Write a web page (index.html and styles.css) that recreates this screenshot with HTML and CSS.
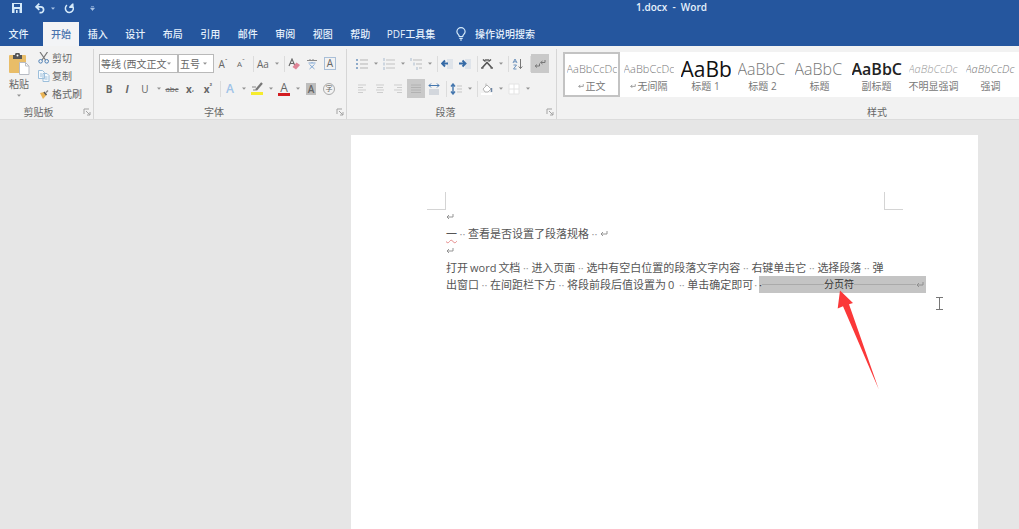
FILE: index.html
```html
<!DOCTYPE html>
<html lang="zh-CN">
<head>
<meta charset="utf-8">
<title>1.docx - Word</title>
<link rel="stylesheet" href="styles.css">
</head>
<body>
<svg class="defs" aria-hidden="true">
  <symbol id="caret" viewBox="0 0 4 3"><path d="M0 0.5h4L2 2.8z" fill="currentColor"/></symbol>
  <symbol id="launch" viewBox="0 0 8 8"><path d="M1 6V1h5M3 3l4 4M7 4v3H4" fill="none" stroke="#a3a3a3"/></symbol>
  <symbol id="ret" viewBox="0 0 8 7"><path d="M7 1v3H1M3 2L1 4l2 2" fill="none" stroke="currentColor" stroke-width=".9"/></symbol>
</svg>

<header class="top">
  <div class="titlebar">
    <div class="quick">
      <button class="q" aria-label="保存"><svg width="10" height="10" viewBox="0 0 10 10"><path d="M0 0h10v10H0z" fill="#d5eafa"/><path d="M2 1h6v3H2zM2.5 6h5v4h-5z" fill="#25569e"/><path d="M4 7h1.6v3H4z" fill="#d5eafa"/></svg></button>
      <button class="q" aria-label="撤消"><svg width="10" height="11" viewBox="0 0 10 11"><path d="M1.2 3.8h4.3a2.9 2.9 0 0 1 .3 5.9H4.5M4.3.6L1.1 3.8l3.2 3.1" fill="none" stroke="#d5eafa" stroke-width="1.7"/></svg></button>
      <button class="qc" aria-label="撤消选项"><svg class="caret"><use href="#caret"/></svg></button>
      <button class="q" aria-label="重做"><svg width="11" height="11" viewBox="0 0 11 11"><path d="M7.6 2.1A4 4 0 1 1 3 2.2M5.2 4.3h3.6V.4M8.8 1L6 4" fill="none" stroke="#d5eafa" stroke-width="1.5"/></svg></button>
      <button class="q customize" aria-label="自定义快速访问工具栏"><svg width="5" height="5" viewBox="0 0 5 5"><path d="M1 .5h3M.5 2h4L2.5 4.5z" fill="#a9c4e6" stroke="#a9c4e6" stroke-width=".6"/></svg></button>
    </div>
    <h1 class="title">1.docx&nbsp; -&nbsp; Word</h1>
  </div>
  <nav class="tabs">
    <button class="file">文件</button>
    <button class="active">开始</button>
    <div class="more">
      <button>插入</button><button>设计</button><button>布局</button><button>引用</button><button>邮件</button><button>审阅</button><button>视图</button><button>帮助</button>
    </div>
    <button class="pdf">PDF工具集</button>
    <button class="tell"><svg width="10" height="14" viewBox="0 0 10 14"><path d="M3.3 9.5C3.3 7.6.9 7 .9 4.7A4.1 4.1 0 0 1 9.1 4.7C9.1 7 6.7 7.6 6.7 9.5zM3.3 11.3h3.4M4 13h2" fill="none" stroke="#d5eafa" stroke-width="1.2"/></svg>操作说明搜索</button>
  </nav>
</header>

<section class="ribbon">
  <div class="group clip">
    <div class="body">
      <button class="paste"><svg width="22" height="22" viewBox="0 0 22 22"><rect x="1" y="2" width="17" height="18" rx="1" fill="#e9bd68"/><path d="M5 2h2a2.5 2.5 0 0 1 5 0h2v4H5z" fill="#555"/><circle cx="9.5" cy="2.5" r="1" fill="#fff"/><path d="M11.5 9.5h6l3.500 3.500v8.500h-9.500z" fill="#fff" stroke="#b8bcc4"/><path d="M17.5 9.5V13H21" fill="none" stroke="#b8bcc4"/></svg><span>粘贴</span><svg class="caret"><use href="#caret"/></svg></button>
      <div class="stack">
        <button><svg width="12" height="12" viewBox="0 0 12 12"><path d="M2 0l5.500 8M9.500 0L4 8" stroke="#777" stroke-width="1.200"/><circle cx="2.600" cy="9.300" r="1.800" fill="none" stroke="#4d7fb5"/><circle cx="8.700" cy="9.300" r="1.800" fill="none" stroke="#4d7fb5"/></svg>剪切</button>
        <button><svg width="12" height="12" viewBox="0 0 12 12"><path d="M.5.500h4l2 2v6h-6zM5 3.500h4l2 2v6H5z" fill="#f4f9fd" stroke="#9dbfdb"/><path d="M2 4h2M2 6h2M6.500 7h3M6.500 9h3" stroke="#9dbfdb"/></svg>复制</button>
        <button><svg width="12" height="12" viewBox="0 0 12 12"><path d="M2 5l4-1 2.500 3-3.500 4z" fill="#e9b455"/><path d="M6 4l2.500 3" stroke="#555" stroke-width="1.500"/><path d="M8 4.500l2-2" stroke="#888" stroke-width="1.500"/></svg>格式刷</button>
      </div>
    </div>
    <div class="foot"><span>剪贴板</span><button aria-label="剪贴板设置"><svg width="8" height="8"><use href="#launch"/></svg></button></div>
  </div>

  <div class="group font">
    <div class="body rows">
      <div class="row combos">
        <label class="combo name"><select aria-label="字体"><option>等线 (西文正文)</option></select><svg class="caret"><use href="#caret"/></svg></label>
        <label class="combo size"><select aria-label="字号"><option>五号</option></select><svg class="caret"><use href="#caret"/></svg></label>
        <button class="t" aria-label="增大字号">A<sup>ˆ</sup></button>
        <button class="t small" aria-label="减小字号">A<sup>ˇ</sup></button>
        <i class="sep"></i>
        <button class="t">Aa</button><button class="c" aria-label="更改大小写选项"><svg class="caret"><use href="#caret"/></svg></button>
        <i class="sep"></i>
        <button aria-label="清除格式"><svg width="12" height="12" viewBox="0 0 12 12"><path d="M1 8l3-7 3 7M2 5.500h4" fill="none" stroke="#666" stroke-width="1.100"/><path d="M8.500 4.500L12 7l-4 4.500-3.500-2.500z" fill="#df8496"/></svg></button>
        <button aria-label="拼音指南"><svg width="12" height="12" viewBox="0 0 12 12"><path d="M1 2.500h10M4 1v1M7 1v1" stroke="#888"/><path d="M2.500 5h7M6 4v1M3.500 6.500l5 4.500M8.500 6.500l-5 4.500" stroke="#82a9d5" fill="none"/></svg></button>
        <button class="t"><span class="boxed">A</span></button>
      </div>
      <div class="row">
        <button class="t b">B</button><button class="t it">I</button><button class="t">U</button><button class="c" aria-label="下划线选项"><svg class="caret"><use href="#caret"/></svg></button>
        <button class="t strike">abc</button><button class="t b">x<sub>,</sub></button><button class="t b">x<sup>²</sup></button>
        <i class="sep"></i>
        <button class="t glow">A</button><button class="c" aria-label="文本效果选项"><svg class="caret"><use href="#caret"/></svg></button>
        <button aria-label="突出显示"><svg width="14" height="13" viewBox="0 0 14 13"><path d="M1 10h12v3H1z" fill="#f6ec2d"/><path d="M2 5h4M3 8h3" stroke="#888"/><path d="M12 1L6 8" stroke="#777" stroke-width="2.200"/></svg></button><button class="c" aria-label="突出显示颜色"><svg class="caret"><use href="#caret"/></svg></button>
        <button class="t"><span class="red">A</span></button><button class="c" aria-label="字体颜色选项"><svg class="caret"><use href="#caret"/></svg></button>
        <button class="t"><span class="shade">A</span></button>
        <button class="t"><span class="circle">字</span></button>
      </div>
    </div>
    <div class="foot"><span>字体</span><button aria-label="字体设置"><svg width="8" height="8"><use href="#launch"/></svg></button></div>
  </div>

  <div class="group para">
    <div class="body rows">
      <div class="row">
        <button aria-label="项目符号"><svg width="12" height="12" viewBox="0 0 12 12"><path d="M0 2h2M0 6h2M0 10h2" stroke="#6f94bd" stroke-width="1.500"/><path d="M4 2h8M4 6h8M4 10h8" stroke="#b5b5b5"/></svg></button><button class="c" aria-label="项目符号选项"><svg class="caret"><use href="#caret"/></svg></button>
        <button aria-label="编号"><svg width="12" height="12" viewBox="0 0 12 12"><path d="M1 0v3M1 4.500v3M1 9v3" stroke="#a8bace"/><path d="M3 2h9M3 6h9M3 10h9" stroke="#c2c2c2"/></svg></button><button class="c" aria-label="编号选项"><svg class="caret"><use href="#caret"/></svg></button>
        <button aria-label="多级列表"><svg width="12" height="12" viewBox="0 0 12 12"><path d="M1 0v3M4 4.500v3M7 9v3" stroke="#a8bace"/><path d="M3 2h9M6 6h6M9 10h3" stroke="#bbb"/></svg></button><button class="c" aria-label="多级列表选项"><svg class="caret"><use href="#caret"/></svg></button>
        <i class="sep"></i>
        <button aria-label="减少缩进"><svg width="12" height="12" viewBox="0 0 12 12"><path d="M6 1h6v10H6z" fill="#dfe4ea"/><path d="M1 5.500h6M4 2.500l-3 3 3 3" fill="none" stroke="#356aa6" stroke-width="1.900"/></svg></button>
        <button aria-label="增加缩进"><svg width="12" height="12" viewBox="0 0 12 12"><path d="M6 1h6v10H6z" fill="#dfe4ea"/><path d="M0 5.500h6M3.500 2.500l3 3-3 3" fill="none" stroke="#356aa6" stroke-width="1.900"/></svg></button>
        <i class="sep"></i>
        <button aria-label="中文版式"><svg width="12" height="12" viewBox="0 0 12 12"><path d="M2 1.500l2.500 2M10 1.500l-2.500 2M1 10l5-5.500 5 5.500" fill="none" stroke="#555" stroke-width="1.600"/><path d="M4 2h4M0 10h2.500M9.500 10H12" stroke="#666" stroke-width="1.300"/></svg></button><button class="c" aria-label="中文版式选项"><svg class="caret"><use href="#caret"/></svg></button>
        <i class="sep"></i>
        <button aria-label="排序"><svg width="12" height="12" viewBox="0 0 12 12"><path d="M1 5l2-4 2 4M1.700 3.800h2.600M1.500 7h3l-3 4h3" fill="none" stroke="#6d92bd"/><path d="M8.500 1v9.500M6.700 8.500l1.800 2 1.800-2" fill="none" stroke="#777"/></svg></button>
        <i class="sep"></i>
        <button class="on" aria-label="显示编辑标记"><svg width="12" height="12" viewBox="0 0 12 12"><path d="M11 2v2.500H6.500M8.500 3L6.700 4.500 8.500 6M5.500 5.500V8H1M3 6.500L1.200 8 3 9.500" fill="none" stroke="#777"/></svg></button>
      </div>
      <div class="row">
        <button aria-label="左对齐"><svg width="10" height="10" viewBox="0 0 10 10"><path d="M1 1h8M1 3.500h5M1 6h8M1 8.500h5" stroke="#cdcdcd"/></svg></button>
        <button aria-label="居中"><svg width="10" height="10" viewBox="0 0 10 10"><path d="M1 1h8M2 3.500h6M1 6h8M2 8.500h6" stroke="#cdcdcd"/></svg></button>
        <button aria-label="右对齐"><svg width="10" height="10" viewBox="0 0 10 10"><path d="M1 1h8M4 3.500h5M1 6h8M4 8.500h5" stroke="#cdcdcd"/></svg></button>
        <button class="on" aria-label="两端对齐"><svg width="10" height="10" viewBox="0 0 10 10"><path d="M0 1h10M0 3.500h10M0 6h10M0 8.500h10" stroke="#b2b2b2"/></svg></button>
        <button aria-label="分散对齐"><svg width="12" height="12" viewBox="0 0 12 12"><path d="M1 2.500h10M3 .5l-2 2 2 2M9 .5l2 2-2 2" fill="none" stroke="#4577ae"/><path d="M1 6h10v6H1z" fill="#d3d7dd"/></svg></button>
        <i class="sep"></i>
        <button aria-label="行距"><svg width="12" height="12" viewBox="0 0 12 12"><path d="M3 1v10M1 3.500L3 1l2 2.500M1 8.500L3 11l2-2.500" fill="none" stroke="#4577ae" stroke-width="1.400"/><path d="M7 3h5M7 6h5M7 9h5" stroke="#c5c5c5"/></svg></button><button class="c" aria-label="行距选项"><svg class="caret"><use href="#caret"/></svg></button>
        <i class="sep"></i>
        <button aria-label="底纹"><svg width="12" height="12" viewBox="0 0 12 12"><path d="M2 6l4-4 4 4-3 3H4zM5 3V.5" fill="#fff" stroke="#b5b5b5"/><path d="M10.500 5v4" stroke="#6d86a5" stroke-width="1.500"/><path d="M0 11h11" stroke="#fff" stroke-width="2"/></svg></button><button class="c" aria-label="底纹选项"><svg class="caret"><use href="#caret"/></svg></button>
        <button aria-label="边框"><svg width="12" height="12" viewBox="0 0 12 12"><path d="M1 1h10v10H1zM6 1v10M1 6h10" fill="#fff" stroke="#e4e4e4"/></svg></button><button class="c" aria-label="边框选项"><svg class="caret"><use href="#caret"/></svg></button>
      </div>
    </div>
    <div class="foot"><span>段落</span><button aria-label="段落设置"><svg width="8" height="8"><use href="#launch"/></svg></button></div>
  </div>

  <div class="group styles">
    <div class="gallery">
      <button class="chosen"><span class="pv">AaBbCcDc</span><span class="nm"><svg class="mk"><use href="#ret"/></svg>正文</span></button>
      <button><span class="pv">AaBbCcDc</span><span class="nm"><svg class="mk"><use href="#ret"/></svg>无间隔</span></button>
      <button><span class="pv h1">AaBb</span><span class="nm">标题 1</span></button>
      <button><span class="pv h2">AaBbC</span><span class="nm">标题 2</span></button>
      <button><span class="pv h2">AaBbC</span><span class="nm">标题</span></button>
      <button><span class="pv h2 sub">AaBbC</span><span class="nm">副标题</span></button>
      <button><span class="pv em">AaBbCcDc</span><span class="nm">不明显强调</span></button>
      <button><span class="pv em dark">AaBbCcDc</span><span class="nm">强调</span></button>
    </div>
    <div class="foot"><span>样式</span></div>
  </div>
</section>

<main class="canvas">
  <article class="page">
    <div class="corners"><i class="left"></i><i class="right"></i></div>
    <div class="text">
      <p><svg class="mark"><use href="#ret"/></svg></p>
      <p><span class="err">一</span><span class="sp">··</span>查看是否设置了段落规格<span class="sp">··</span><svg class="mark"><use href="#ret"/></svg></p>
      <p><svg class="mark"><use href="#ret"/></svg></p>
      <p>打开<span class="latin">word</span>文档<span class="sp">··</span>进入页面<span class="sp">··</span>选中有空白位置的段落文字内容<span class="sp">··</span>右键单击它<span class="sp">··</span>选择段落<span class="sp">··</span>弹</p>
      <p>出窗口<span class="sp">··</span>在间距栏下方<span class="sp">··</span>将段前段后值设置为<span class="num">0</span><span class="sp">··</span>单击确定即可<span class="sp half">·</span><span class="break"><span>·</span><i></i><b>分页符</b><i></i><svg class="mark"><use href="#ret"/></svg></span></p>
    </div>
    <svg class="pointer" width="44" height="102" viewBox="0 0 44 102" aria-hidden="true"><path d="M4 1.500L17 14l-4 1.200L42.800 100.500 7 17.300 1.700 19.500z" fill="#fb3839"/></svg>
    <svg class="ibeam" width="7" height="13" viewBox="0 0 7 13" aria-hidden="true"><path d="M0 .5h7M3.500.5v12M0 12.500h7" stroke="#777" fill="none"/></svg>
  </article>
</main>
</body>
</html>
```
FILE: styles.css
```css
* { box-sizing: border-box; }
body {
  margin: 0;
  min-height: 100vh;
  display: flex;
  flex-direction: column;
  overflow: hidden;
  background: #e6e6e6;
  font: 10px/14px "Open Sans", "Noto Sans CJK SC", sans-serif;
  color: #666;
}
button {
  border: 0;
  padding: 0;
  margin: 0;
  background: none;
  color: inherit;
  font: inherit;
  white-space: nowrap;
  display: flex;
  align-items: center;
  justify-content: center;
}
svg { flex: none; display: block; }
.defs { position: absolute; width: 0; height: 0; }
.caret { width: 4px; height: 3px; color: #929292; }

/* title bar and tabs */
.top { background: #25569e; color: #e6f1fc; }
.titlebar { height: 22px; display: flex; align-items: flex-start; }
.quick { display: flex; align-items: center; height: 16px; padding-left: 8px; width: 636px; }
.q { width: 17px; }
.q + .q, .quick .q:nth-child(2) { margin-left: 6px; }
.qc { width: 10px; }
.qc + .q { margin-left: 3px; }
.qc .caret { color: #a9c4e6; }
.quick .customize { margin-left: 6px; }
.title { margin: 0; font-size: 10px; font-weight: 600; line-height: 14px; white-space: nowrap; }
.tabs { display: flex; height: 24px; font-weight: 500; }
.file { width: 37px; }
.active { width: 36px; margin-left: 6px; background: #f3f4f6; color: #4a73ad; }
.more { display: flex; width: 300px; }
.more button { flex: 1; }
.pdf { width: 64px; }
.tell { margin-left: 13px; gap: 9px; }

/* ribbon */
.ribbon { display: flex; height: 74px; padding-top: 3px; background: #f2f2f2; border-bottom: 1px solid #dcdcdc; overflow: hidden; }
.group { display: flex; flex-direction: column; flex: none; height: 70px; border-right: 1px solid #d6d6d6; }
.body { display: flex; height: 54px; }
.foot { display: flex; align-items: center; height: 14px; margin-top: 2px; }
.foot span { flex: 1; text-align: center; }
.foot button { width: 12px; }
.clip { width: 94px; }
.clip .foot span { padding-right: 4px; }
.font { width: 253px; }
.para { width: 210px; }
.paste { flex-direction: column; justify-content: flex-start; width: 38px; padding-top: 4px; }
.paste span { margin: 2px 0 3px; }
.stack { display: grid; grid-template-rows: repeat(3, 18px); }
.stack button { justify-content: flex-start; gap: 2px; }
.rows { flex-direction: column; gap: 6px; padding: 5px 6px 0; }
.row { display: flex; align-items: center; height: 19px; }
.row button { width: 18px; height: 19px; }
.row .c { width: 9px; }
.combos { margin-left: -1px; }
.sep { width: 4px; height: 16px; border-right: 1px solid #dcdcdc; }
.combo { display: grid; grid-template-columns: 1fr 10px; align-items: center; height: 19px; border: 1px solid #b9b9b9; background: #fff; }
.combo select { min-width: 0; appearance: none; border: 0; padding: 0 0 0 1px; margin: 0; background: none; font: inherit; color: inherit; }
.name { width: 79px; }
.size { width: 36px; }
.t { color: #666; }
.t.b { font-weight: 700; }
.t.it { font-style: italic; font-weight: 700; }
.t.strike { font-size: 8px; text-decoration: line-through; }
.t.small { font-size: 8px; }
.t.glow { color: #9fc3e8; font-weight: 600; font-size: 12px; }
.t sup, .t sub { font-size: 7px; line-height: 7px; }
.t sup { align-self: flex-start; padding-top: 4px; }
.boxed { width: 12px; border: 1px solid #a9bfd8; line-height: 11px; }
.red { width: 12px; border-bottom: 3px solid #d31c20; font-size: 12px; line-height: 11px; }
.shade { width: 10px; background: #bdbdbd; line-height: 12px; font-weight: 600; }
.circle { width: 12px; height: 12px; border: 1px solid #aaa; border-radius: 50%; font-size: 7px; line-height: 10px; }
.on { background: #c9c9c9; }

/* style gallery */
.styles { flex: 1; min-width: 0; padding: 3px 0 0 6px; border: 0; }
.gallery { display: flex; height: 45px; background: #fff; overflow: hidden; }
.gallery button { flex: 0 0 57px; min-width: 0; flex-direction: column; height: 45px; padding: 2px 1px; border: 2px solid transparent; justify-content: flex-end; }
.gallery .chosen { border-color: #c3c3c3; }
.pv { width: 50px; height: 26px; line-height: 26px; overflow: hidden; text-align: left; font-size: 11px; font-weight: 300; color: #777; }
.nm { display: flex; align-items: center; gap: 2px; height: 14px; color: #777; }
.mk { width: 6px; height: 6px; }
.h1 { font-size: 21px; font-weight: 400; color: #111; }
.h2 { font-size: 16px; }
.sub { font-weight: 600; color: #222; }
.em { font-style: italic; color: #999; }
.dark { color: #777; }
.styles .foot { margin: 8px 0 0; padding-left: 172px; }

/* document */
.canvas { flex: 1; display: flex; padding: 15px 41px 0 351px; }
.page { flex: 1; min-width: 0; position: relative; background: #fff; padding: 57px 75px 0 76px; color: #555; font-size: 11px; }
.corners { display: flex; justify-content: space-between; height: 18px; }
.corners i { width: 19px; border-bottom: 1px solid #d4d4d4; }
.corners .left { border-right: 1px solid #d4d4d4; }
.corners .right { border-left: 1px solid #d4d4d4; }
.text { margin: -2px -23px 0 0; padding-left: 19px; }
.text p { display: flex; align-items: center; height: 17px; margin: 0; line-height: 17px; white-space: nowrap; }
.mark { width: 8px; height: 7px; color: #8b8b8b; }
.sp { flex: none; width: 11px; text-align: center; color: #999; }
.half { width: 5px; }
.latin { margin: 0 2px; }
.num { margin: 0 2px; }
.err { text-decoration: underline wavy #e58b8b 1px; text-underline-offset: 1px; }
.break { display: flex; align-items: center; flex: none; width: 167px; height: 17px; margin-left: auto; padding-right: 2px; background: #c4c4c4; color: #333; }
.break i { flex: 1; height: 1px; background: #aaa; }
.break b { font-weight: 400; font-size: 10px; }
.pointer { position: absolute; left: 485px; top: 154px; }
.ibeam { position: absolute; left: 585px; top: 162px; }
```
